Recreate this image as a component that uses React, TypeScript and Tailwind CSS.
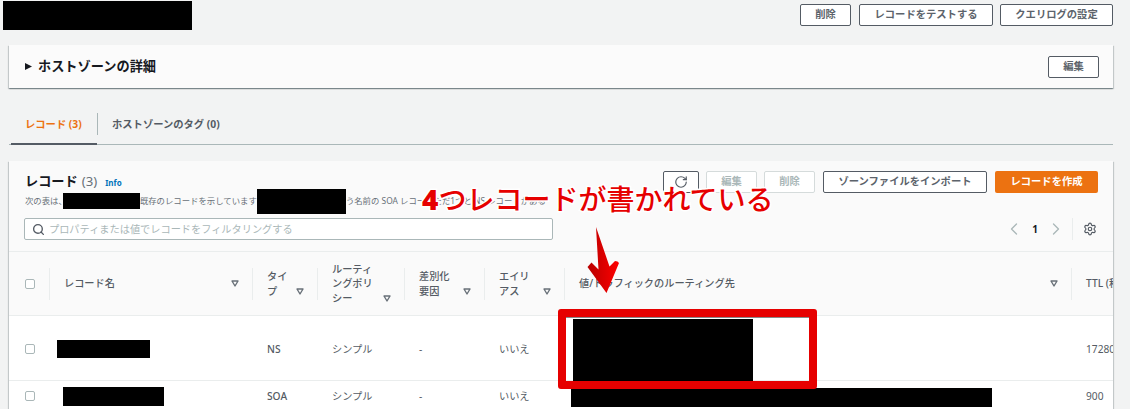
import { ChevronLeft, ChevronRight, RotateCw, Search, Settings } from "lucide-react"

const cols = "grid grid-cols-[40px_203px_65px_87px_80px_80px_507px_60px]"

function Btn({ label, className = "" }: { label: string; className?: string }) {
	return (
		<button className={`flex h-[22px] items-center justify-center rounded-[2px] border border-[#545b64] bg-white text-[10.3px] font-bold text-[#5c636b] ${className}`}>
			{label}
		</button>
	)
}

function SortIcon() {
	return (
		<svg width="8" height="7" viewBox="0 0 8 7" className="shrink-0">
			<path d="M1 1h6L4 6z" fill="none" stroke="#687078" strokeWidth="1.4" strokeLinejoin="round" />
		</svg>
	)
}

function Check() {
	return <div className="h-[10px] w-[10px] rounded-[2px] border border-[#aab7b8] bg-white" />
}

function HeadCell({ lines, last }: { lines: string[]; last?: boolean }) {
	return (
		<div className="flex h-[32px] items-center border-l border-[#eaeded] pl-[14px] pr-[13px]">
			<div className={`flex w-full justify-between ${lines.length > 1 ? "items-end" : "items-center"}`}>
				<span className="text-[10.2px] font-medium leading-[14.5px] text-[#545b64]">
					{lines.map((l) => (
						<span key={l} className="block whitespace-nowrap">{l}</span>
					))}
				</span>
				{!last && <span className={lines.length > 1 ? "pb-[3px]" : ""}><SortIcon /></span>}
			</div>
		</div>
	)
}

function Row({ height, name, value, ttl, type, second }: { height: string; name: React.ReactNode; value: React.ReactNode; ttl: string; type: string; second?: boolean }) {
	const text = "pl-[15px] pt-[2px] text-[10.2px] text-[#545b64]"
	return (
		<div className={`${cols} ${height} ${second ? "" : "border-b border-[#eaeded]"} items-center bg-white`}>
			<div className="pl-[16px]"><Check /></div>
			{name}
			<div className={`${text} font-medium`}>{type}</div>
			<div className={text}>シンプル</div>
			<div className={text}>-</div>
			<div className={text}>いいえ</div>
			{value}
			<div className={`${text} whitespace-nowrap`}>{ttl}</div>
		</div>
	)
}

export default function App() {
	return (
		<div
			className="relative h-[409px] w-[1130px] overflow-hidden bg-[#f2f3f3] text-[#16191f]"
			style={{ fontFamily: '"Noto Sans", "Noto Sans CJK JP", sans-serif' }}
		>
			{/* page header */}
			<div className="flex h-[45px] items-start justify-between pl-[3px] pr-[17px]">
				<div className="mt-[1px] h-[29px] w-[189px] bg-black" />
				<div className="mt-[4px] flex gap-[7px]">
					<Btn label="削除" className="mr-[1px] w-[51px]" />
					<Btn label="レコードをテストする" className="w-[134px]" />
					<Btn label="クエリログの設定" className="w-[113px]" />
				</div>
			</div>

			{/* hosted zone details */}
			<div className="mx-[9px] flex h-[43px] w-[1104px] items-center justify-between bg-[#fbfbfb] pl-[16px] pr-[14px] shadow-[0_1px_1px_0_rgba(0,28,36,0.3),1px_1px_1px_0_rgba(0,28,36,0.15),-1px_1px_1px_0_rgba(0,28,36,0.15)]">
				<div className="flex items-center gap-[6px]">
					<svg width="7" height="7" viewBox="0 0 7 7"><path d="M0 0l7 3.500L0 7z" fill="#16191f" /></svg>
					<span className="text-[13.2px] font-bold">ホストゾーンの詳細</span>
				</div>
				<Btn label="編集" className="w-[51px]" />
			</div>

			{/* tabs */}
			<div className="mx-[9px] mt-[25px] flex h-[32px] w-[1104px] border-b border-[#aab7b8]">
				<div className="ml-[2px] h-[32px] w-[86px] border-b-2 border-[#545b64] pl-[14px] pt-[3px] text-[10.3px] font-bold leading-[16px] text-[#ec7211]">
					レコード (3)
				</div>
				<div className="h-[22px] border-l border-[#aab7b8] pl-[14px] pt-[3px] text-[10.3px] font-bold leading-[16px] text-[#545b64]">
					ホストゾーンのタグ (0)
				</div>
			</div>

			{/* records */}
			<div className="mx-[9px] mt-[16px] h-[260px] w-[1104px] bg-[#fafafa] shadow-[0_1px_1px_0_rgba(0,28,36,0.3),1px_1px_1px_0_rgba(0,28,36,0.15),-1px_1px_1px_0_rgba(0,28,36,0.15)]">
				<div className="flex h-[57px] justify-between pl-[16px] pr-[15px] pt-[10px]">
					<div>
						<div className="flex items-baseline text-[13.2px] font-bold leading-[20px]">
							レコード
							<span className="ml-[4px] font-normal text-[#687078]">(3)</span>
							<span className="ml-[8px] text-[8px] text-[#0073bb]">Info</span>
						</div>
						<div className="flex h-[16px] items-center whitespace-nowrap text-[8.4px] text-[#687078]">
							次の表は、
							<span className="-ml-[4px] h-[16px] w-[77px] bg-black" />
							既存のレコードを示しています
							<span className="-my-[5px] h-[25px] w-[89px] bg-black" />
							う名前の SOA レコードただ1つと NS レコードがある
						</div>
					</div>
					<div className="flex gap-[7px]">
						<button className="flex h-[22px] w-[36px] items-center justify-center rounded-[2px] border border-[#545b64] bg-white">
							<RotateCw size={14} strokeWidth={2} color="#545b64" />
						</button>
						<button className="h-[22px] w-[51px] rounded-[2px] border border-[#d5dbdb] bg-white text-[10.3px] font-bold text-[#aab7b8]">編集</button>
						<button className="mr-[1px] h-[22px] w-[51px] rounded-[2px] border border-[#d5dbdb] bg-white text-[10.3px] font-bold text-[#aab7b8]">削除</button>
						<Btn label="ゾーンファイルをインポート" className="mr-[1px] w-[164px]" />
						<button className="h-[22px] w-[103px] rounded-[2px] bg-[#ec7211] text-[10.3px] font-bold text-white">レコードを作成</button>
					</div>
				</div>

				<div className="flex h-[34px] items-start border-b border-[#eaeded] pl-[15px]">
					<div className="flex h-[22px] w-[529px] items-center gap-[4px] rounded-[2px] border border-[#aab7b8] bg-white pl-[7px]">
						<Search size={13} strokeWidth={2.500} color="#545b64" />
						<span className="pt-[1px] text-[10.2px] text-[#aab7b8]">プロパティまたは値でレコードをフィルタリングする</span>
					</div>
					<div className="ml-[451px] flex h-[22px] items-center">
						<ChevronLeft size={20} color="#aab7b8" strokeWidth={1.6} />
						<span className="ml-[5px] w-[12px] text-center text-[10px] font-bold">1</span>
						<ChevronRight size={20} color="#aab7b8" strokeWidth={1.6} className="ml-[5px]" />
						<div className="ml-[6px] h-[22px] border-l border-[#eaeded]" />
						<Settings size={14} color="#545b64" strokeWidth={2} className="ml-[10px]" />
					</div>
				</div>

				<div className="overflow-hidden">
					<div className={`${cols} h-[64px] items-center border-b border-[#eaeded] bg-[#fafafa]`}>
						<div className="pl-[16px]"><Check /></div>
						<HeadCell lines={["レコード名"]} />
						<HeadCell lines={["タイ", "プ"]} />
						<HeadCell lines={["ルーティ", "ングポリ", "シー"]} />
						<HeadCell lines={["差別化", "要因"]} />
						<HeadCell lines={["エイリ", "アス"]} />
						<HeadCell lines={["値/トラフィックのルーティング先"]} />
						<HeadCell lines={["TTL (秒)"]} last />
					</div>
					<Row
						height="h-[65px]"
						type="NS"
						ttl="172800"
						name={<div className="ml-[8px] h-[18px] w-[93px] bg-black" />}
						value={<div className="ml-[9px] mt-[3px] h-[62px] w-[180px] bg-black" />}
					/>
					<Row
						height="h-[30px]"
						second
						type="SOA"
						ttl="900"
						name={<div className="ml-[14px] h-[19px] w-[101px] bg-black" />}
						value={<div className="ml-[7px] mt-[3px] h-[19px] w-[421px] bg-black" />}
					/>
				</div>
			</div>

			{/* annotation */}
			<div className="absolute left-[558px] top-[309px] h-[80px] w-[259px] rounded-[3px] border-[8px] border-[#e60000] shadow-[inset_0_1px_0_#888]" />
			<svg className="absolute left-[584px] top-[225px]" width="38" height="70" viewBox="584 225 38 70">
				<defs>
					<linearGradient id="arrow" x1="0" x2="1" y1="0" y2="0">
						<stop offset="0" stopColor="#b80000" />
						<stop offset="1" stopColor="#ff0000" />
					</linearGradient>
				</defs>
				<path d="M596 227L609.500 266.500L615 261Q618 261 619 263L606.500 293L587.500 267L591.500 262.500L598.500 269.500Z" fill="url(#arrow)" strokeLinejoin="round" />
			</svg>
			<div className="absolute left-[422px] top-[181px] whitespace-nowrap text-[28px] font-medium leading-[36px] text-[#e60000] [-webkit-text-stroke:3px_white] [paint-order:stroke_fill]">
				<span className="font-black">4</span>つレコードが書かれている
			</div>
		</div>
	)
}
